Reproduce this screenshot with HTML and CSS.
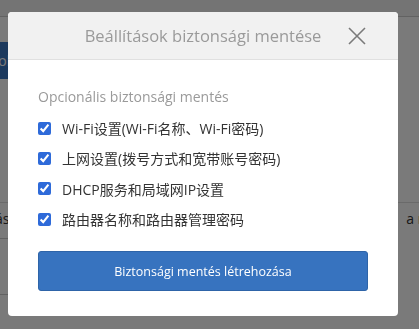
FILE: index.html
```html
<!DOCTYPE html>
<html>
<head>
  <meta charset="UTF-8">
  <title>Beállítások biztonsági mentése</title>
  <link rel="stylesheet" href="styles.css">
</head>
<body>
  <div class="page">
    <div class="topbar"></div>
    <div class="page-row">
      <button class="page-btn">Beállítások</button>
    </div>
    <div class="page-line"></div>
    <div class="page-text">
      <span class="left">Visszaállítás</span>
      <span class="right">a router</span>
    </div>
    <div class="page-box"></div>
  </div>

  <div class="overlay">
    <div class="dialog">
      <div class="dialog-header">
        <span class="dialog-title">Beállítások biztonsági mentése</span>
        <svg class="close" width="18" height="18" viewBox="0 0 18 18">
          <path d="M1 1L17 17M17 1L1 17" stroke="#7a7a7a" stroke-width="1.6" fill="none"/>
        </svg>
      </div>
      <div class="dialog-body">
        <div class="sub">Opcionális biztonsági mentés</div>
        <label class="opt"><input type="checkbox" checked>Wi-Fi设置(Wi-Fi名称、Wi-Fi密码)</label>
        <label class="opt"><input type="checkbox" checked>上网设置(拨号方式和宽带账号密码)</label>
        <label class="opt"><input type="checkbox" checked>DHCP服务和局域网IP设置</label>
        <label class="opt"><input type="checkbox" checked>路由器名称和路由器管理密码</label>
        <button class="primary">Biztonsági mentés létrehozása</button>
      </div>
    </div>
  </div>
</body>
</html>
```

FILE: styles.css
```css
body {
  margin: 0;
  width: 419px;
  height: 329px;
  overflow: hidden;
  font-family: "Open Sans", "Noto Sans", "Noto Sans CJK SC", sans-serif;
  background: #fff;
}
.page {
  height: 329px;
  overflow: hidden;
}
.topbar {
  height: 16px;
  border-bottom: 1px solid #ccc;
  background: #f2f2f2;
}
.page-row {
  padding-top: 25px;
}
.page-btn {
  width: 120px;
  height: 37px;
  margin-left: -100px;
  border: none;
  background: #3c78c2;
  color: #fff;
  font-family: inherit;
  font-size: 14px;
  text-align: right;
}
.page-line {
  margin-top: 123px;
  border-top: 1px solid #ddd;
}
.page-text {
  display: flex;
  justify-content: space-between;
  margin-top: 6px;
  font-size: 14px;
  color: #333;
  white-space: nowrap;
}
.page-text .left {
  margin-left: -68px;
}
.page-text .right {
  margin-right: -40px;
}
.page-box {
  width: 40px;
  height: 55px;
  margin: 10px 0 0 -30px;
  border: 1px solid #ccc;
  border-radius: 4px;
}
.overlay {
  position: fixed;
  top: 0;
  left: 0;
  right: 0;
  bottom: 0;
  background: rgba(0, 0, 0, 0.52);
  padding: 12px 0 0 8px;
}
.dialog {
  width: 390px;
  background: #fff;
  border-radius: 4px;
  overflow: hidden;
}
.dialog-header {
  height: 47px;
  background: #f1f1f1;
  border-bottom: 1px solid #e0e0e0;
  display: flex;
  align-items: center;
  justify-content: center;
  position: relative;
}
.dialog-title {
  font-size: 16.5px;
  color: #9a9a9a;
}
.close {
  position: absolute;
  right: 32px;
  top: 15px;
}
.dialog-body {
  padding: 27px 30px 25px 30px;
  display: flex;
  flex-direction: column;
}
.sub {
  font-size: 14px;
  color: #9a9a9a;
  margin-bottom: 7px;
}
.opt {
  display: flex;
  align-items: center;
  height: 30.3px;
  font-size: 14px;
  color: #333;
}
.opt input {
  width: 13px;
  height: 13px;
  margin: 0 11px 0 0;
  accent-color: #2e6ad9;
}
.primary {
  margin-top: 17px;
  width: 330px;
  height: 40px;
  border: 1px solid #2e64a8;
  border-radius: 3px;
  background: #3773bf;
  color: #fff;
  font-family: inherit;
  font-size: 12.5px;
}
```
